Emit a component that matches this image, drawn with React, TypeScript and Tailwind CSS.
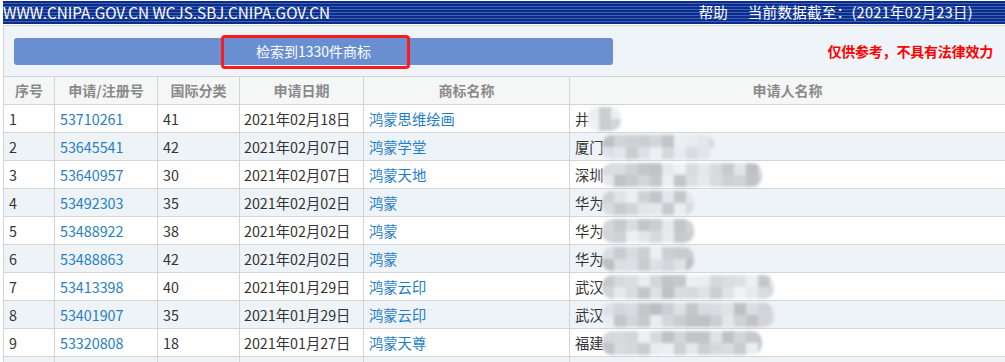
import React from "react";

const rows = [
  { n: "1", reg: "53710261", cls: "41", date: "2021年02月18日", name: "鸿蒙思维绘画", app: "井", blur: 34, seed: 1 },
  { n: "2", reg: "53645541", cls: "42", date: "2021年02月07日", name: "鸿蒙学堂", app: "厦门", blur: 112, seed: 2 },
  { n: "3", reg: "53640957", cls: "30", date: "2021年02月07日", name: "鸿蒙天地", app: "深圳", blur: 160, seed: 3 },
  { n: "4", reg: "53492303", cls: "35", date: "2021年02月02日", name: "鸿蒙", app: "华为", blur: 92, seed: 4 },
  { n: "5", reg: "53488922", cls: "38", date: "2021年02月02日", name: "鸿蒙", app: "华为", blur: 92, seed: 5 },
  { n: "6", reg: "53488863", cls: "42", date: "2021年02月02日", name: "鸿蒙", app: "华为", blur: 92, seed: 6 },
  { n: "7", reg: "53413398", cls: "40", date: "2021年01月29日", name: "鸿蒙云印", app: "武汉", blur: 172, seed: 7 },
  { n: "8", reg: "53401907", cls: "35", date: "2021年01月29日", name: "鸿蒙云印", app: "武汉", blur: 172, seed: 8 },
  { n: "9", reg: "53320808", cls: "18", date: "2021年01月27日", name: "鸿蒙天尊", app: "福建", blur: 160, seed: 9 },
  { n: "", reg: "", cls: "", date: "", name: "", app: "", blur: 0, seed: 10 },
];

function shade(seed: number, i: number) {
  const v = Math.abs(Math.sin(seed * 12.9898 + i * 78.233) * 43758.5453) % 1;
  const g = Math.round(182 + v * 58);
  return `rgb(${g - 2},${g},${g + 4})`;
}

function Mosaic({ width, seed }: { width: number; seed: number }) {
  const cols = Math.ceil(width / 12);
  const cells = [];
  for (let r = 0; r < 2; r++) {
    for (let c = 0; c < cols; c++) {
      cells.push(
        <div key={r + "-" + c} className="w-[12px] h-[12px]" style={{ background: shade(seed, r * 31 + c) }} />
      );
    }
  }
  return (
    <div
      className="grid overflow-hidden rounded-[10px] blur-[1.5px] opacity-85"
      style={{ width, gridTemplateColumns: `repeat(${cols}, 12px)` }}
    >
      {cells}
    </div>
  );
}

export default function App() {
  const font = "font-['Microsoft_YaHei','Noto_Sans_CJK_SC','Noto_Sans',sans-serif]";
  return (
    <div className={`w-[1005px] h-[362px] overflow-hidden bg-white ${font}`}>
      <div className="pl-[3px] pt-[1px]">
        {/* top bar */}
        <div className="h-[23px] flex items-center text-white bg-[repeating-linear-gradient(180deg,#0c2c8c_0px,#0c2c8c_2px,#3d63b6_2px,#3d63b6_3px)]">
          <div className="text-[15.3px] leading-none">WWW.CNIPA.GOV.CN WCJS.SBJ.CNIPA.GOV.CN</div>
          <div className="ml-auto flex items-center text-[14.5px] leading-none pr-[32px]">
            <span className="mr-[20px]">帮助</span>
            <span className="tracking-[0.3px]">当前数据截至：(2021年02月23日)</span>
          </div>
        </div>
        <div className="h-[1px] bg-white" />
        {/* panel */}
        <div className="border-l border-t border-[#d6d6d6] bg-[#eff4f8] h-[51px] flex items-center pl-[10px] pr-[12px]">
          <div className="relative w-[599px] h-[27px] rounded-[3px] bg-[#6a8fd1] flex items-center justify-center text-white text-[14px]">
            检索到1330件商标
            <div className="absolute left-[207px] top-[-3px] w-[189px] h-[34px] border-[3px] border-[#ff1a1a] rounded-[4px]" />
          </div>
          <div className="ml-auto text-[#ff0000] font-bold text-[14px] tracking-[-0.2px]">仅供参考，不具有法律效力</div>
        </div>
        {/* table */}
        <table className="border-collapse table-fixed w-[1002px] text-[14.3px]">
          <colgroup>
            <col className="w-[51px]" />
            <col className="w-[103px]" />
            <col className="w-[82px]" />
            <col className="w-[124px]" />
            <col className="w-[206px]" />
            <col />
          </colgroup>
          <thead>
            <tr className="h-[28px] bg-[#f5f6f6] text-[#8a8a8a] font-bold text-[14px]">
              <th className="border border-[#d4d4d4] font-bold">序号</th>
              <th className="border border-[#d4d4d4] font-bold">申请/注册号</th>
              <th className="border border-[#d4d4d4] font-bold">国际分类</th>
              <th className="border border-[#d4d4d4] font-bold">申请日期</th>
              <th className="border border-[#d4d4d4] font-bold">商标名称</th>
              <th className="border border-[#d4d4d4] border-r-0 font-bold">申请人名称</th>
            </tr>
          </thead>
          <tbody>
            {rows.map((r, i) => (
              <tr key={i} className={`h-[28px] ${i % 2 === 1 ? "bg-[#eef3f8]" : "bg-white"}`}>
                <td className="border border-[#d4d4d4] pl-[5px] text-[#333]">{r.n}</td>
                <td className="border border-[#d4d4d4] pl-[5px] text-[#1f7ec6]">{r.reg}</td>
                <td className="border border-[#d4d4d4] pl-[5px] text-[#333]">{r.cls}</td>
                <td className="border border-[#d4d4d4] pl-[4px] text-[#333]">{r.date}</td>
                <td className="border border-[#d4d4d4] pl-[5px] text-[#1f7ec6]">{r.name}</td>
                <td className="border border-[#d4d4d4] border-r-0 pl-[5px] text-[#333]">
                  <div className="flex items-center">
                    <span>{r.app}</span>
                    {r.blur > 0 && (
                      <div className="-ml-[2px]">
                        <Mosaic width={r.blur} seed={r.seed} />
                      </div>
                    )}
                  </div>
                </td>
              </tr>
            ))}
          </tbody>
        </table>
      </div>
    </div>
  );
}
